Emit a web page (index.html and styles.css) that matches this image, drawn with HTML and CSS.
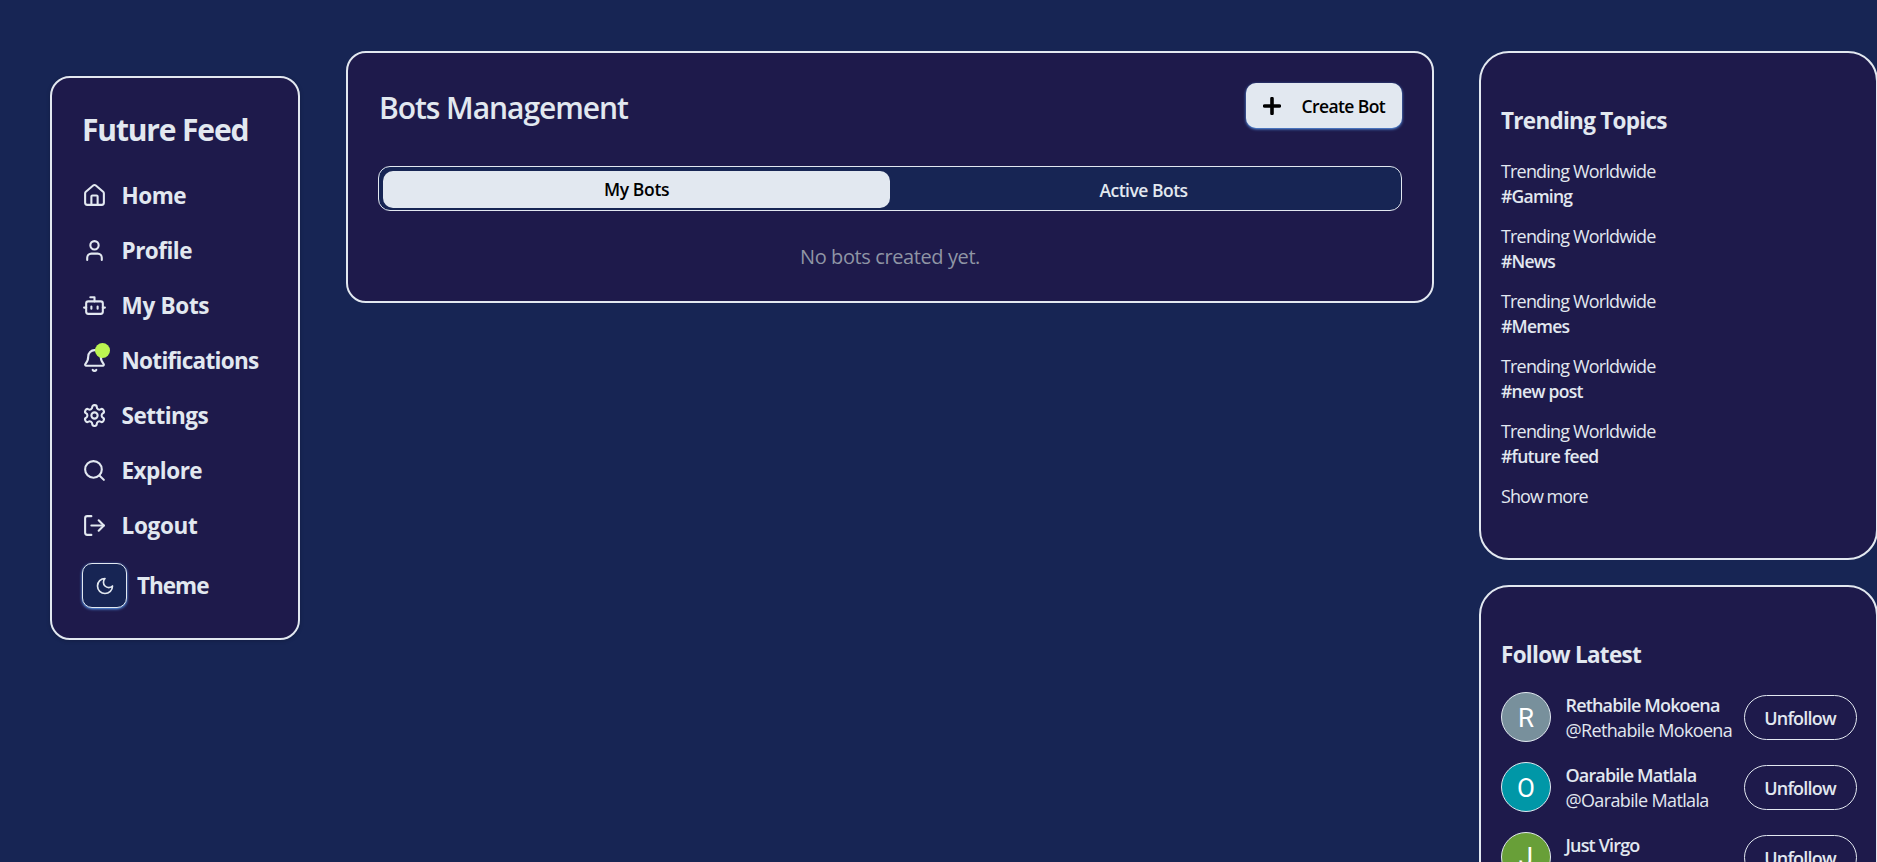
FILE: index.html
```html
<!DOCTYPE html>
<html lang="en">
<head>
<meta charset="utf-8">
<title>Future Feed</title>
<link rel="stylesheet" href="styles.css">
</head>
<body>
<div class="layout">
  <aside class="sidebar">
    <h1 class="brand">Future Feed</h1>
    <nav class="nav">
      <a class="nav-item tight-sm"><svg class="icon" viewBox="0 0 24 24"><path d="M15 21v-8a1 1 0 0 0-1-1h-4a1 1 0 0 0-1 1v8"/><path d="M3 10a2 2 0 0 1 .709-1.528l7-5.999a2 2 0 0 1 2.582 0l7 5.999A2 2 0 0 1 21 10v9a2 2 0 0 1-2 2H5a2 2 0 0 1-2-2z"/></svg>Home</a>
      <a class="nav-item tight-sm"><svg class="icon" viewBox="0 0 24 24"><path d="M19 21v-2a4 4 0 0 0-4-4H9a4 4 0 0 0-4 4v2"/><circle cx="12" cy="7" r="4"/></svg>Profile</a>
      <a class="nav-item tight-xs"><svg class="icon" viewBox="0 0 24 24"><path d="M12 8V4H8"/><rect width="16" height="12" x="4" y="8" rx="2"/><path d="M2 14h2M20 14h2M15 13v2M9 13v2"/></svg>My Bots</a>
      <a class="nav-item tight-md"><span class="bell"><svg class="icon" viewBox="0 0 24 24"><path d="M10.268 21a2 2 0 0 0 3.464 0"/><path d="M3.262 15.326A1 1 0 0 0 4 17h16a1 1 0 0 0 .74-1.673C19.41 13.956 18 12.499 18 8A6 6 0 0 0 6 8c0 4.499-1.411 5.956-2.738 7.326"/></svg><i class="dot"></i></span>Notifications</a>
      <a class="nav-item tight-sm"><svg class="icon" viewBox="0 0 24 24"><path d="M12.22 2h-.44a2 2 0 0 0-2 2v.18a2 2 0 0 1-1 1.73l-.43.25a2 2 0 0 1-2 0l-.15-.08a2 2 0 0 0-2.73.73l-.22.38a2 2 0 0 0 .73 2.73l.15.1a2 2 0 0 1 1 1.72v.51a2 2 0 0 1-1 1.74l-.15.09a2 2 0 0 0-.73 2.73l.22.38a2 2 0 0 0 2.73.73l.15-.08a2 2 0 0 1 2 0l.43.25a2 2 0 0 1 1 1.73V20a2 2 0 0 0 2 2h.44a2 2 0 0 0 2-2v-.18a2 2 0 0 1 1-1.73l.43-.25a2 2 0 0 1 2 0l.15.08a2 2 0 0 0 2.73-.73l.22-.39a2 2 0 0 0-.73-2.73l-.15-.08a2 2 0 0 1-1-1.74v-.5a2 2 0 0 1 1-1.74l.15-.09a2 2 0 0 0 .73-2.73l-.22-.38a2 2 0 0 0-2.73-.73l-.15.08a2 2 0 0 1-2 0l-.43-.25a2 2 0 0 1-1-1.73V4a2 2 0 0 0-2-2z"/><circle cx="12" cy="12" r="3"/></svg>Settings</a>
      <a class="nav-item tight-sm"><svg class="icon" viewBox="0 0 24 24"><circle cx="11" cy="11" r="8"/><path d="m21 21-4.3-4.3"/></svg>Explore</a>
      <a class="nav-item tight-xs"><svg class="icon" viewBox="0 0 24 24"><path d="M9 21H5a2 2 0 0 1-2-2V5a2 2 0 0 1 2-2h4"/><path d="m16 17 5-5-5-5"/><path d="M21 12H9"/></svg>Logout</a>
    </nav>
    <div class="theme">
      <button class="theme-btn"><svg class="icon moon" viewBox="0 0 24 24"><path d="M12 3a6 6 0 0 0 9 9 9 9 0 1 1-9-9Z"/></svg></button>
      <span>Theme</span>
    </div>
  </aside>

  <main class="panel">
    <header class="panel-head">
      <h2 class="panel-title">Bots Management</h2>
      <button class="create"><svg class="plus" viewBox="0 0 18 18"><path d="M9 1.6v14.8M1.6 9h14.8"/></svg>Create Bot</button>
    </header>
    <div class="tabs">
      <div class="tab tab-on">My Bots</div>
      <div class="tab">Active Bots</div>
    </div>
    <p class="empty">No bots created yet.</p>
  </main>

  <div class="rail">
    <section class="card">
      <h3 class="card-title">Trending Topics</h3>
      <div class="topics">
        <div class="topic"><p>Trending Worldwide</p><p class="tag">#Gaming</p></div>
        <div class="topic"><p>Trending Worldwide</p><p class="tag">#News</p></div>
        <div class="topic"><p>Trending Worldwide</p><p class="tag">#Memes</p></div>
        <div class="topic"><p>Trending Worldwide</p><p class="tag">#new post</p></div>
        <div class="topic"><p>Trending Worldwide</p><p class="tag">#future feed</p></div>
        <p class="more">Show more</p>
      </div>
    </section>
    <section class="card">
      <h3 class="card-title">Follow Latest</h3>
      <div class="people">
        <div class="person"><span class="avatar slate">R</span><div class="who"><p class="name">Rethabile Mokoena</p><p class="handle">@Rethabile Mokoena</p></div><button class="follow">Unfollow</button></div>
        <div class="person"><span class="avatar teal">O</span><div class="who"><p class="name">Oarabile Matlala</p><p class="handle">@Oarabile Matlala</p></div><button class="follow">Unfollow</button></div>
        <div class="person"><span class="avatar green">J</span><div class="who"><p class="name">Just Virgo</p></div><button class="follow">Unfollow</button></div>
      </div>
    </section>
  </div>
</div>
</body>
</html>
```
FILE: styles.css
```css
* { box-sizing: border-box; margin: 0; padding: 0; }

html, body { height: 862px; overflow: hidden; }

body {
  background: #172554;
  color: #e2e8f0;
  font-family: "Segoe UI", "Open Sans", "Noto Sans", sans-serif;
  font-size: 18px;
  line-height: 25px;
}

button { font: inherit; color: inherit; }

.layout {
  display: flex;
  align-items: flex-start;
  width: 1878.5px;
  padding: 51px 0 0 50px;
}

.sidebar {
  flex: none;
  width: 250px;
  height: 564px;
  margin: 25px 46px 0 0;
  padding: 30px;
  background: #1e1a4b;
  border: 2px solid #e2e8f0;
  border-radius: 20px;
  box-shadow: 0 1px 4px rgba(0, 0, 0, .2);
}

.brand {
  padding-top: 2px;
  font-size: 30px;
  line-height: 40px;
  letter-spacing: -1.15px;
  margin-bottom: 18px;
  white-space: nowrap;
}

.nav { display: flex; flex-direction: column; }

.nav-item {
  display: flex;
  align-items: center;
  gap: 14.5px;
  height: 55px;
  font-size: 22.5px;
  font-weight: 700;
}

.tight-xs { letter-spacing: -.3px; }
.tight-sm { letter-spacing: -.5px; }
.tight-md { letter-spacing: -.7px; }

.icon {
  flex: none;
  display: block;
  width: 25px;
  height: 25px;
  fill: none;
  stroke: currentColor;
  stroke-width: 2;
  stroke-linecap: round;
  stroke-linejoin: round;
}

.bell { position: relative; }

.dot {
  position: absolute;
  top: -5px;
  right: -3px;
  width: 15px;
  height: 15px;
  border-radius: 50%;
  background: #bbf451;
}

.theme {
  display: flex;
  align-items: center;
  gap: 10px;
  margin-top: 10px;
  font-size: 22.5px;
  font-weight: 700;
  letter-spacing: -1px;
}

.theme-btn {
  display: flex;
  align-items: center;
  justify-content: center;
  width: 45px;
  height: 45px;
  background: #172554;
  border: 1px solid #e2e8f0;
  border-radius: 10px;
  box-shadow: 0 1px 3px #60a5fa;
}

.moon { width: 20px; height: 20px; }

.panel {
  flex: none;
  width: 1088px;
  height: 252px;
  margin-right: 45px;
  padding: 30px;
  background: #1e1a4b;
  border: 2px solid #e2e8f0;
  border-radius: 20px;
}

.panel-head {
  display: flex;
  align-items: center;
  justify-content: space-between;
  height: 45px;
  margin-bottom: 38px;
}

.panel-title {
  padding: 4px 0 0 1px;
  font-size: 30px;
  font-weight: 600;
  line-height: 36px;
  letter-spacing: -1.05px;
}

.create {
  display: flex;
  align-items: center;
  gap: 20.5px;
  width: 156.5px;
  height: 45px;
  padding: 1px 0 0 17.5px;
  background: #e2e8f0;
  border: 0;
  border-radius: 10px;
  color: #000;
  font-size: 17.5px;
  font-weight: 550;
  letter-spacing: -.6px;
  white-space: nowrap;
  box-shadow: 0 1px 3px #60a5fa;
}

.plus {
  flex: none;
  width: 18px;
  height: 18px;
  fill: none;
  stroke: #000;
  stroke-width: 3.6;
  stroke-linecap: round;
}

.tabs {
  display: grid;
  grid-template-columns: 1fr 1fr;
  height: 45px;
  padding: 4px;
  background: #172554;
  border: 1px solid #e2e8f0;
  border-radius: 12px;
}

.tab {
  display: flex;
  align-items: center;
  justify-content: center;
  height: 37px;
  padding-top: 2px;
  font-size: 17.5px;
  font-weight: 600;
  letter-spacing: -.5px;
}

.tab-on {
  padding-top: 0;
  background: #e2e8f0;
  border-radius: 10px;
  color: #000;
  font-weight: 550;
  letter-spacing: -.35px;
}

.empty {
  margin-top: 31px;
  color: #8f95a5;
  font-size: 20px;
  line-height: 30px;
  letter-spacing: -.4px;
  text-align: center;
}

.rail {
  flex: none;
  display: flex;
  flex-direction: column;
  gap: 25px;
  width: 399px;
}

.card {
  padding: 53px 19.5px 48.5px 20px;
  background: #1e1a4b;
  border: 2px solid #e2e8f0;
  border-radius: 30px;
  white-space: nowrap;
}

.card-title {
  font-size: 22.5px;
  line-height: 30px;
  letter-spacing: -.72px;
  margin-bottom: 22px;
}

.topics {
  display: flex;
  flex-direction: column;
  gap: 15px;
  padding-top: 1px;
  letter-spacing: -.83px;
}

.tag { font-size: 17.5px; font-weight: 650; letter-spacing: -.75px; }
.more { letter-spacing: -.95px; }

.people { display: flex; flex-direction: column; gap: 20px; }

.person {
  display: grid;
  grid-template-columns: 50px 1fr 113px;
  align-items: center;
  column-gap: 14.5px;
  height: 50px;
}

.avatar {
  display: flex;
  align-items: center;
  justify-content: center;
  width: 50px;
  height: 50px;
  padding-top: 2px;
  border: 1px solid #e2e8f0;
  border-radius: 50%;
  color: #fff;
  font-family: Roboto, sans-serif;
  font-size: 26px;
}

.slate { background: #78909c; }
.teal { background: #0097a7; }
.green { background: #689f38; }

.who { align-self: start; min-width: 0; padding-top: 1px; }
.name { font-weight: 600; letter-spacing: -.84px; }
.handle { letter-spacing: -.64px; }

.follow {
  height: 45px;
  margin-top: 1px;
  padding-top: 2px;
  background: transparent;
  border: 1px solid #e2e8f0;
  border-radius: 23px;
  font-weight: 600;
  letter-spacing: -.8px;
}
```
